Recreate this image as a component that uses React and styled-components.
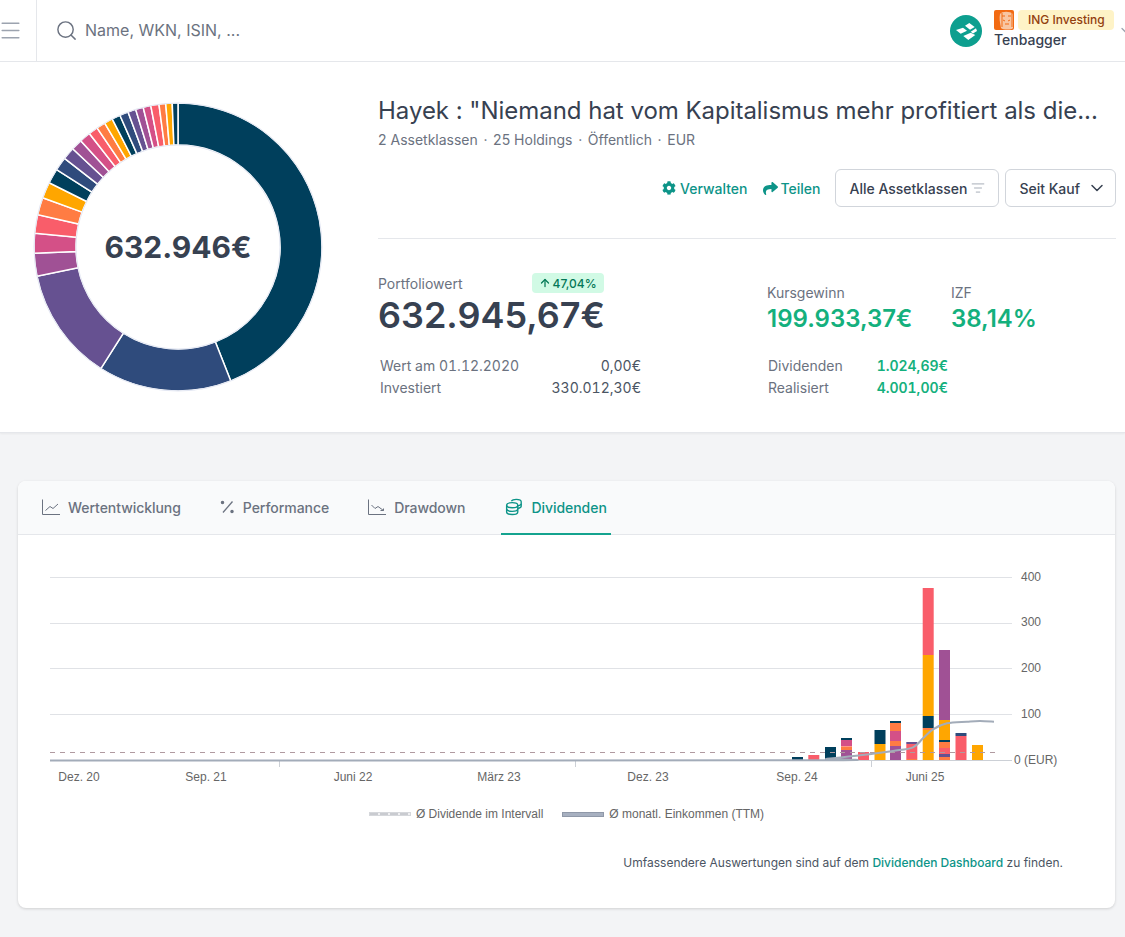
import React from 'react';
import styled, { createGlobalStyle } from 'styled-components';
import { FaCog, FaShare } from 'react-icons/fa';
import { ChevronDown, ListFilter, Search, Menu, ArrowUp } from 'lucide-react';

const GlobalStyle = createGlobalStyle`
  html, body {
    margin: 0;
    padding: 0;
    background: #f3f4f6;
    font-family: Inter, "Noto Sans", sans-serif;
    overflow-x: hidden;
  }
  * { box-sizing: border-box; }
`;

const Page = styled.div`
  width: 1125px;
  height: 937px;
  overflow: hidden;
`;

const Header = styled.header`
  height: 62px;
  display: flex;
  align-items: center;
  background: #fff;
  border-bottom: 1px solid #e5e7eb;
  overflow: hidden;
`;

const MenuButton = styled.div`
  width: 37px;
  height: 100%;
  flex: none;
  display: flex;
  align-items: center;
  color: #9ca3af;
  border-right: 1px solid #e5e7eb;
  svg { margin-left: -2px; flex: none; }
`;

const SearchBox = styled.div`
  flex: 1;
  display: flex;
  align-items: center;
  gap: 7px;
  padding-left: 18px;
  padding-bottom: 1px;
  color: #6b7280;
  font-size: 16px;
`;

const Account = styled.div`
  width: 175px;
  flex: none;
  display: flex;
  align-items: center;
  gap: 12px;
  svg { flex: none; }
`;

const AccountText = styled.div`
  display: flex;
  flex-direction: column;
  margin-top: -2px;
  white-space: nowrap;
`;

const BrokerRow = styled.div`
  display: flex;
  align-items: center;
  gap: 4px;
  height: 20px;
`;

const BrokerBadge = styled.span`
  background: #fef3c7;
  color: #92400e;
  font-size: 12px;
  font-weight: 500;
  line-height: 20px;
  padding: 0 9px 0 10px;
  border-radius: 4px;
`;

const AccountName = styled.div`
  color: #374151;
  font-size: 14px;
  font-weight: 500;
  line-height: 20px;
`;

const AccountChevron = styled(ChevronDown)`
  color: #9ca3af;
  margin-left: -9px;
`;

const Summary = styled.section`
  height: 371px;
  display: flex;
  background: #fff;
  border-bottom: 1px solid #e5e7eb;
  box-shadow: 0 1px 2px rgba(0, 0, 0, 0.05);
`;

const DonutColumn = styled.div`
  width: 378px;
  flex: none;
  padding: 41px 0 0 34px;
`;

const DonutWrap = styled.div`
  position: relative;
  width: 288px;
  height: 288px;
  svg { display: block; overflow: visible; }
`;

const DonutValue = styled.div`
  position: absolute;
  inset: 0;
  display: flex;
  align-items: center;
  justify-content: center;
  font-size: 30px;
  font-weight: 700;
  color: #374151;
`;

const Details = styled.div`
  flex: 1;
  padding: 33px 9px 0 0;
  min-width: 0;
`;

const Title = styled.h1`
  margin: 0;
  font-size: 24px;
  line-height: 32px;
  font-weight: 400;
  letter-spacing: -0.03px;
  color: #374151;
  white-space: nowrap;
`;

const Meta = styled.div`
  margin-top: 3px;
  font-size: 14px;
  line-height: 20px;
  color: #6b7280;
`;

const MetaDot = styled.span`
  margin: 0 1.7px;
`;

const Actions = styled.div`
  margin-top: 19px;
  display: flex;
  justify-content: flex-end;
  align-items: center;
  gap: 6px;
  padding-bottom: 31px;
  border-bottom: 1px solid #e5e7eb;
`;

const ActionLink = styled.a`
  display: inline-flex;
  align-items: center;
  gap: ${(p) => p.$iconGap}px;
  margin-right: ${(p) => p.$gap || 0}px;
  color: #0d9488;
  font-size: 14px;
  font-weight: 500;
`;

const SelectButton = styled.div`
  height: 38px;
  display: inline-flex;
  align-items: center;
  gap: ${(p) => p.$gap}px;
  padding: 0 ${(p) => p.$right}px 0 13px;
  background: #fff;
  border: 1px solid #d1d5db;
  border-radius: 6px;
  color: #374151;
  font-size: 14px;
  font-weight: 500;
  white-space: nowrap;
`;

const Stats = styled.div`
  display: flex;
  padding-top: 34px;
`;

const LeftStats = styled.div`
  width: 263px;
  flex: none;
`;

const RightStats = styled.div`
  margin-left: 126px;
  flex: 1;
  padding-top: 11px;
`;

const ValueHead = styled.div`
  display: flex;
  align-items: center;
  height: 20px;
  font-size: 14px;
  color: #6b7280;
`;

const Pill = styled.span`
  margin-left: 69px;
  display: inline-flex;
  align-items: center;
  gap: 2px;
  height: 20px;
  padding: 0 7px 0 7px;
  background: #d1fae5;
  color: #047857;
  font-size: 12px;
  font-weight: 500;
  border-radius: 4px;
`;

const BigValue = styled.div`
  margin-top: 2px;
  font-size: 36px;
  line-height: 40px;
  font-weight: 600;
  color: #374151;
  white-space: nowrap;
`;

const Rows = styled.div`
  margin-top: ${(p) => p.$top}px;
  padding-left: ${(p) => p.$left}px;
  font-size: 14px;
  line-height: 22px;
  color: #6b7280;
  font-variant-numeric: tabular-nums;
`;

const Row = styled.div`
  display: flex;
  justify-content: space-between;
  width: ${(p) => p.$width}px;
`;

const RowValue = styled.span`
  color: ${(p) => (p.$positive ? '#14b07d' : '#4b5563')};
  font-weight: ${(p) => (p.$positive ? 600 : 400)};
`;

const GainGrid = styled.div`
  display: grid;
  grid-template-columns: 184px auto;
`;

const GainLabel = styled.div`
  font-size: 14px;
  line-height: 18px;
  margin-bottom: 2px;
  color: #6b7280;
`;

const GainValue = styled.div`
  font-size: 24px;
  line-height: 30px;
  font-weight: 600;
  color: #14b07d;
  white-space: nowrap;
`;

const Main = styled.main`
  padding: 48px 10px 0 18px;
`;

const Card = styled.section`
  height: 427px;
  background: #fff;
  border-radius: 8px;
  box-shadow: 0 1px 3px rgba(0, 0, 0, 0.15);
  overflow: hidden;
`;

const Tabs = styled.nav`
  height: 54px;
  display: flex;
  gap: 31px;
  padding-left: 20px;
  background: #f9fafb;
  border-bottom: 1px solid #e5e7eb;
`;

const Tab = styled.div`
  display: flex;
  align-items: center;
  gap: 8px;
  height: 54px;
  padding: 0 4px;
  margin-left: ${(p) => (p.$active ? 1 : 0)}px;
  font-size: 14px;
  font-weight: 500;
  letter-spacing: -0.05px;
  color: ${(p) => (p.$active ? '#0d9488' : '#6b7280')};
  border-bottom: 2px solid ${(p) => (p.$active ? '#14a38f' : 'transparent')};
  white-space: nowrap;
`;

const ChartBox = styled.div`
  height: 287px;
  padding-top: 28px;
`;

const ChartSvg = styled.svg`
  display: block;
`;

const Legend = styled.div`
  display: flex;
  justify-content: center;
  align-items: center;
  gap: 19px;
  height: 16px;
  margin-top: 17px;
  font-family: "Liberation Sans", Arial, sans-serif;
  font-size: 12px;
  color: #666;
`;

const LegendItem = styled.span`
  display: inline-flex;
  align-items: center;
  gap: 5px;
`;

const LegendDash = styled.i`
  width: 42px;
  height: 4px;
  background: repeating-linear-gradient(90deg, #c9cbd0 0 8px, #f0f0f2 8px 10px);
  border: 1px solid #d5d7db;
`;

const LegendLine = styled.i`
  width: 42px;
  height: 5px;
  background: #a7b0c0;
  border: 1px solid #8f98a8;
`;

const Footnote = styled.p`
  margin: 33px 52px 0 0;
  text-align: right;
  font-size: 12px;
  line-height: 16px;
  color: #4b5563;
`;

const FootLink = styled.a`
  color: #0d9488;
  font-weight: 500;
`;

const palette = ['#003f5c', '#2f4b7c', '#665191', '#a05195', '#d45087', '#f95d6a', '#ff7c43', '#ffa600'];

// end angle of every holding, clockwise from the top
const sliceEnds = [
  158.5, 212.4, 258.3, 267.5, 275.5, 283, 290, 296.5, 302.5, 308, 313, 317.5, 322, 325.8, 329.4,
  332.8, 336.2, 339.7, 342.9, 346, 349.1, 352.4, 355.1, 357.7, 360,
];

const polar = (r, deg) => {
  const a = ((deg - 90) * Math.PI) / 180;
  return [144 + r * Math.cos(a), 144 + r * Math.sin(a)];
};

const slicePath = (from, to) => {
  const big = to - from > 180 ? 1 : 0;
  const [x1, y1] = polar(144, from);
  const [x2, y2] = polar(144, to);
  const [x3, y3] = polar(102, to);
  const [x4, y4] = polar(102, from);
  return `M${x1} ${y1}A144 144 0 ${big} 1 ${x2} ${y2}L${x3} ${y3}A102 102 0 ${big} 0 ${x4} ${y4}Z`;
};

const Donut = () => (
  <svg width="288" height="288" viewBox="0 0 288 288">
    {sliceEnds.map((end, i) => (
      <path
        key={end}
        d={slicePath(i === 0 ? 0 : sliceEnds[i - 1], end)}
        fill={palette[i % 8]}
        stroke="#fff"
        strokeWidth="1.5"
      />
    ))}
    <circle cx="144" cy="144" r="144" fill="none" stroke="#e3e7f3" strokeWidth="1" />
    <circle cx="144" cy="144" r="102" fill="none" stroke="#e3e7f3" strokeWidth="1" />
  </svg>
);

const barX = [792, 808.3, 825, 841, 858, 874.5, 890, 906.3, 922.7, 939, 955.5, 972];

// every segment: [top, bottom, colour]
const bars = [
  [[757, 760, palette[0]]],
  [[755, 760, palette[5]]],
  [[747, 760, palette[0]]],
  [[738, 740, palette[0]], [740, 746, palette[4]], [746, 747, '#f98'], [747, 750, palette[6]], [750, 760, palette[3]]],
  [[752, 760, palette[5]]],
  [[730, 744, palette[0]], [744, 760, palette[7]]],
  [[721, 723, palette[0]], [723, 731, palette[6]], [731, 741, palette[4]], [741, 746, palette[6]], [746, 760, palette[3]]],
  [[742, 744, palette[2]], [744, 759, palette[5]], [759, 760, palette[6]]],
  [[588, 655, palette[5]], [655, 716, palette[7]], [716, 728, palette[0]], [728, 730, palette[6]], [730, 760, palette[7]]],
  [[650, 720, palette[3]], [720, 740, palette[7]], [740, 742, palette[0]], [742, 748, palette[6]], [748, 754, palette[5]], [754, 757, palette[2]], [757, 760, palette[6]]],
  [[733, 736, palette[1]], [736, 760, palette[5]]],
  [[745, 760, palette[7]]],
];

const gridLines = [577, 623, 668, 714];
const yLabels = [[400, 577], [300, 622], [200, 668], [100, 714]];
const xLabels = [['Dez. 20', 79], ['Sep. 21', 206], ['Juni 22', 353], ['März 23', 499], ['Dez. 23', 648], ['Sep. 24', 797], ['Juni 25', 925]];

// monthly income curve, smoothed between these points
const incomePoints = [
  [50, 760.5], [793, 760.3], [827, 758.7], [860, 755.3], [893, 751], [913, 747.3],
  [923, 738.3], [933, 729.3], [947, 723.3], [967, 721.7], [980, 721], [994, 721.7],
];

const smoothPath = (points) =>
  points.reduce((d, [x, y], i) => {
    if (i === 0) return `M${x} ${y}`;
    if (i === 1) return `${d}L${x} ${y}`;
    const p0 = points[i - 2];
    const p1 = points[i - 1];
    const p3 = points[Math.min(i + 1, points.length - 1)];
    const c1 = [p1[0] + (x - p0[0]) / 6, p1[1] + (y - p0[1]) / 6];
    const c2 = [x - (p3[0] - p1[0]) / 6, y - (p3[1] - p1[1]) / 6];
    return `${d}C${c1[0]} ${c1[1]} ${c2[0]} ${c2[1]} ${x} ${y}`;
  }, '');

const TOP = 563; // y of the chart svg on the page
const LEFT = 18;
const labelFont = { fontFamily: '"Liberation Sans", Arial, sans-serif', fontSize: 12, fill: '#666' };

const DividendChart = () => (
  <ChartSvg width="1097" height="226" viewBox={`${LEFT} ${TOP} 1097 226`}>
    {gridLines.map((y) => (
      <line key={y} x1="50" x2="1012" y1={y + 0.5} y2={y + 0.5} stroke="#e0e2e6" />
    ))}
    <line x1="50" x2="1012" y1="760.5" y2="760.5" stroke="#ccd0d6" />
    {[279, 575, 871].map((x) => (
      <line key={x} x1={x + 0.5} x2={x + 0.5} y1="761" y2="767" stroke="#ccd0d6" />
    ))}
    {bars.map((segments, i) =>
      segments.map(([top, bottom, color]) => (
        <rect key={`${i}-${top}`} x={barX[i]} y={top} width="11" height={bottom - top} fill={color} />
      )),
    )}
    <line x1="50" x2="995" y1="752.5" y2="752.5" stroke="#b09aa0" strokeDasharray="5 5" />
    <path d={smoothPath(incomePoints)} fill="none" stroke="#a3acb9" strokeWidth="2" />
    {yLabels.map(([label, y]) => (
      <text key={label} x="1021" y={y + 4} {...labelFont}>{label}</text>
    ))}
    <text x="1014" y="764" {...labelFont}>0 (EUR)</text>
    {xLabels.map(([label, x]) => (
      <text key={label} x={x} y="781" textAnchor="middle" {...labelFont}>{label}</text>
    ))}
  </ChartSvg>
);

const Logo = () => (
  <svg width="32" height="32" viewBox="0 0 32 32">
    <circle cx="16" cy="16" r="16" fill="#0d9f8f" />
    <g fill="#fff">
      <path d="M6 15l7-2.200 4 2.900-6.300 3z" />
      <path d="M15 10.700L19.300 8l5.400 4-4.700 2.700z" />
      <path d="M20.700 16.700L26 13.300l1 2.700-4 2.500z" />
      <path d="M13.300 21l7.400-3.300 4.600 2.300-7 5z" />
    </g>
  </svg>
);

const IngLogo = () => (
  <svg width="20" height="20" viewBox="0 0 20 20">
    <rect width="20" height="20" rx="2" fill="#f26a12" />
    <path d="M6 4c2-3 10-3 13 0v14c-1 2-10 2-12 0C6 13 5 8 6 4z" fill="#f8c6a2" />
    <path d="M8 6h3M14 6h3M9 10l2 1M16 10l-2 1M11 14h4M8 3v14M18 3v14" stroke="#f26a12" strokeWidth="1" />
  </svg>
);

const LineIcon = () => (
  <svg width="18" height="18" viewBox="0 0 18 18" fill="none" stroke="currentColor" strokeWidth="1">
    <path d="M0.500 1.500V16.500H18" />
    <path d="M3.500 12.500L8 8.500L11 10.500L16 6" />
  </svg>
);

const PercentIcon = () => (
  <svg width="15" height="18" viewBox="0 0 15 18" fill="none" stroke="currentColor" strokeWidth="1.300">
    <path d="M12.500 3.500L3 14.500" />
    <circle cx="2.500" cy="4.500" r="1.100" fill="currentColor" />
    <circle cx="12" cy="13.500" r="1.100" fill="currentColor" />
  </svg>
);

const DrawdownIcon = () => (
  <svg width="18" height="18" viewBox="0 0 18 18" fill="none" stroke="currentColor" strokeWidth="1">
    <path d="M0.500 1.500V16.500H18" />
    <path d="M3.500 7L7 10.500L10 8.500L15.500 12.500M15.500 12.500H12.500M15.500 12.500V10.500" />
  </svg>
);

const CoinsIcon = () => (
  <svg width="18" height="20" viewBox="0 0 20 20" fill="none" stroke="currentColor" strokeWidth="1.500">
    <ellipse cx="8" cy="8" rx="6.200" ry="2.800" />
    <path d="M1.800 8v7.500c0 1.500 2.800 2.800 6.200 2.800s6.200-1.300 6.200-2.800V8" />
    <path d="M1.800 12c0 1.500 2.800 2.800 6.200 2.800s6.200-1.300 6.200-2.800" />
    <path d="M7 3.500C8 2 10 1.500 12.500 1.500c3 0 5.500 1.200 5.500 2.700v5c0 1.100-1.500 2-3.800 2.400" />
    <path d="M18 6.500c0 1-1.500 2-3.800 2.300" />
  </svg>
);

const App = () => (
  <Page>
    <GlobalStyle />
    <Header>
      <MenuButton>
        <Menu size={25} strokeWidth={1.4} />
      </MenuButton>
      <SearchBox>
        <Search size={23} strokeWidth={1.5} />
        Name, WKN, ISIN, ...
      </SearchBox>
      <Account>
        <Logo />
        <AccountText>
          <BrokerRow>
            <IngLogo />
            <BrokerBadge>ING Investing</BrokerBadge>
          </BrokerRow>
          <AccountName>Tenbagger</AccountName>
        </AccountText>
        <AccountChevron size={20} strokeWidth={1.5} />
      </Account>
    </Header>

    <Summary>
      <DonutColumn>
        <DonutWrap>
          <Donut />
          <DonutValue>632.946€</DonutValue>
        </DonutWrap>
      </DonutColumn>
      <Details>
        <Title>Hayek : "Niemand hat vom Kapitalismus mehr profitiert als die...</Title>
        <Meta>
          2 Assetklassen <MetaDot>·</MetaDot> 25 Holdings <MetaDot>·</MetaDot> Öffentlich <MetaDot>·</MetaDot> EUR
        </Meta>
        <Actions>
          <ActionLink $gap={10} $iconGap={4}>
            <FaCog size={14} />
            Verwalten
          </ActionLink>
          <ActionLink $gap={9} $iconGap={2}>
            <FaShare size={15} />
            Teilen
          </ActionLink>
          <SelectButton $gap={4} $right={13}>
            Alle Assetklassen
            <ListFilter size={14} color="#9ca3af" strokeWidth={1.5} />
          </SelectButton>
          <SelectButton $gap={7} $right={8}>
            Seit Kauf
            <ChevronDown size={20} strokeWidth={1.8} />
          </SelectButton>
        </Actions>
        <Stats>
          <LeftStats>
            <ValueHead>
              Portfoliowert
              <Pill>
                <ArrowUp size={12} strokeWidth={2.5} />
                47,04%
              </Pill>
            </ValueHead>
            <BigValue>632.945,67€</BigValue>
            <Rows $top={20} $left={2}>
              <Row $width={261}>
                Wert am 01.12.2020
                <RowValue>0,00€</RowValue>
              </Row>
              <Row $width={261}>
                Investiert
                <RowValue>330.012,30€</RowValue>
              </Row>
            </Rows>
          </LeftStats>
          <RightStats>
            <GainGrid>
              <div>
                <GainLabel>Kursgewinn</GainLabel>
                <GainValue>199.933,37€</GainValue>
              </div>
              <div>
                <GainLabel>IZF</GainLabel>
                <GainValue>38,14%</GainValue>
              </div>
            </GainGrid>
            <Rows $top={21} $left={1}>
              <Row $width={180}>
                Dividenden
                <RowValue $positive>1.024,69€</RowValue>
              </Row>
              <Row $width={180}>
                Realisiert
                <RowValue $positive>4.001,00€</RowValue>
              </Row>
            </Rows>
          </RightStats>
        </Stats>
      </Details>
    </Summary>

    <Main>
      <Card>
        <Tabs>
          <Tab>
            <LineIcon />
            Wertentwicklung
          </Tab>
          <Tab>
            <PercentIcon />
            Performance
          </Tab>
          <Tab>
            <DrawdownIcon />
            Drawdown
          </Tab>
          <Tab $active>
            <CoinsIcon />
            Dividenden
          </Tab>
        </Tabs>
        <ChartBox>
          <DividendChart />
          <Legend>
            <LegendItem>
              <LegendDash />
              Ø Dividende im Intervall
            </LegendItem>
            <LegendItem>
              <LegendLine />
              Ø monatl. Einkommen (TTM)
            </LegendItem>
          </Legend>
        </ChartBox>
        <Footnote>
          Umfassendere Auswertungen sind auf dem <FootLink>Dividenden Dashboard</FootLink> zu finden.
        </Footnote>
      </Card>
    </Main>
  </Page>
);

export default App;
